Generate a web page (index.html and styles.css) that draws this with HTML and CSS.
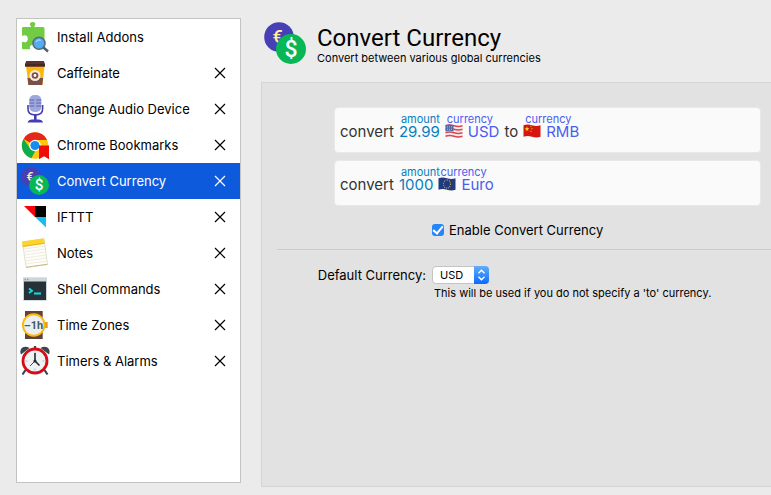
FILE: index.html
```html
<!DOCTYPE html>
<html lang="en">
<head>
<meta charset="utf-8">
<title>Convert Currency</title>
<link rel="stylesheet" href="styles.css">
</head>
<body>
<svg class="defs" aria-hidden="true">
  <symbol id="cross" viewBox="0 0 12 12"><path d="M1 1l10 10M11 1L1 11" fill="none" stroke="currentColor" stroke-width="1.150"/></symbol>
</svg>
<div class="window">
  <nav class="sidebar">
    <ul class="addons">
      <li class="addon">
        <svg class="icon" viewBox="0 0 36 36"><path d="M6 8h7.800c.8-.8-.9-1.400-.9-2.600a2.600 2.300 0 0 1 5.400 0c0 1.200-1.700 1.800-.9 2.600H26q1.500 0 1.500 1.500V29q0 1.300-1.300 1.300h-7c-1-1 .5-1.600-.4-3a3.200 3.200 0 0 0-5.600 0c-.9 1.400.6 2 -.4 3H6.300Q5 30.300 5 29v-6.500c2 1.300 5.800 1.300 5.800-2.800s-3.800-4-5.800-2.700V9q0-1 1-1z" fill="#72cc43"/><path d="M26 28l5 4.500" stroke="#4d5d69" stroke-width="2.400"/><circle cx="22" cy="24.200" r="6" fill="#52acf3" stroke="#586b77" stroke-width="1.600"/><path d="M19 23q2-3 5-1.500" stroke="#9bd3fb" stroke-width="1.300" fill="none"/></svg>
        <a href="#install">Install Addons</a>
      </li>
      <li class="addon">
        <svg class="icon" viewBox="0 0 36 36"><path d="M9 11h18.500l-2 19h-14z" fill="#fbb80c"/><path d="M10.500 23h15.600l-.8 7H11.300z" fill="#795047"/><path d="M9.200 6h17.600l1.200 3v2.500H8V9z" fill="#59332f"/><path d="M8 9h20v2.500H8z" fill="#482725"/><circle cx="18" cy="20.500" r="5.500" fill="#f7e9dc"/><circle cx="18" cy="20.500" r="3.300" fill="#7b5148"/><circle cx="18" cy="20.500" r="1.400" fill="#fff"/></svg>
        <a href="#caffeinate">Caffeinate</a>
        <button class="remove" aria-label="Remove Caffeinate"><svg><use href="#cross"/></svg></button>
      </li>
      <li class="addon">
        <svg class="icon" viewBox="0 0 36 36"><rect x="12.300" y="4" width="12" height="17" rx="5" fill="#9fa8da"/><path d="M12.300 9h5M19.300 9h5M12.300 12h5M19.300 12h5M12.300 15h5M19.300 15h5" stroke="#5c62b8" stroke-width="1"/><path d="M11 14v4q0 6 7.300 6t7.300-6v-4" fill="none" stroke="#453db0" stroke-width="1.600"/><path d="M17 23h2.600v6H17zM10.500 31.500q1-3 4.500-3h6.600q3.500 0 4.500 3z" fill="#453db0"/></svg>
        <a href="#audio">Change Audio Device</a>
        <button class="remove" aria-label="Remove Change Audio Device"><svg><use href="#cross"/></svg></button>
      </li>
      <li class="addon">
        <svg class="icon" viewBox="0 0 36 36"><circle cx="18" cy="18.500" r="13.200" fill="#ffc90a"/><path d="M18 18.500L6.600 11.900a13.200 13.200 0 0 1 22.900 0L30 13H18z" fill="#e5261f"/><path d="M6.600 11.900l6.700 9.500 4.700 3-3.600 6.800A13.200 13.200 0 0 1 6.600 11.900z" fill="#0eab4f"/><circle cx="18" cy="18.500" r="5.800" fill="#fff"/><circle cx="18" cy="18.500" r="4.600" fill="#168eee"/><path d="M22 18.500h10v13.800l-5-3-5 3z" fill="#f00d08"/></svg>
        <a href="#bookmarks">Chrome Bookmarks</a>
        <button class="remove" aria-label="Remove Chrome Bookmarks"><svg><use href="#cross"/></svg></button>
      </li>
      <li class="addon selected">
        <svg class="icon coins" viewBox="0 0 42 42"><circle cx="15" cy="15" r="14.800" fill="#473fb5"/><text x="13.500" y="20.500" class="glyph euro">€</text><circle cx="27" cy="27" r="15" fill="#07b655"/><text x="27" y="35" class="glyph dollar">$</text></svg>
        <a href="#currency" aria-current="page">Convert Currency</a>
        <button class="remove" aria-label="Remove Convert Currency"><svg><use href="#cross"/></svg></button>
      </li>
      <li class="addon">
        <svg class="icon" viewBox="0 0 36 36"><path d="M7 7h11v11z" fill="#fb0007"/><path d="M18 7h11v11H18z" fill="#000"/><path d="M18 18h11v10.500z" fill="#16bdf5"/></svg>
        <a href="#ifttt">IFTTT</a>
        <button class="remove" aria-label="Remove IFTTT"><svg><use href="#cross"/></svg></button>
      </li>
      <li class="addon">
        <svg class="icon" viewBox="0 0 36 36"><path d="M5.500 7L27 4l3.500 25.500L9 32.500z" fill="#fefdf8" stroke="#d8d3c2" stroke-width=".7"/><path d="M6.800 14l21-3M7.200 17l21-3M7.600 20l21-3M8 23l21-3M8.400 26l21-3M8.800 29l21-3" stroke="#e9e7e0" stroke-width=".8"/><path d="M9 32.300l21.300-3" stroke="#c9b984" stroke-width="1"/><path d="M5 6.500L27 3.300l.8 5.400L5.800 12z" fill="#fdd32c"/><path d="M5.700 11.400l22-3.200" stroke="#e0ad16" stroke-width=".8"/></svg>
        <a href="#notes">Notes</a>
        <button class="remove" aria-label="Remove Notes"><svg><use href="#cross"/></svg></button>
      </li>
      <li class="addon">
        <svg class="icon" viewBox="0 0 36 36"><path d="M6 6.300h24v23.500H6z" fill="#cdd6da"/><path d="M7 10.500h22v18.500H7z" fill="#263238"/><path d="M7.500 8.500h1.400M10 8.500h1.400" stroke="#8b9da6" stroke-width="1.300"/><path d="M12 17.500l3 2.300-3 2.300M17 22.500h7" fill="none" stroke="#12dbe5" stroke-width="1.900"/></svg>
        <a href="#shell">Shell Commands</a>
        <button class="remove" aria-label="Remove Shell Commands"><svg><use href="#cross"/></svg></button>
      </li>
      <li class="addon">
        <svg class="icon" viewBox="0 0 36 36"><path d="M8 4h17.700v28H8z" fill="#61433b"/><path d="M27 15h3.700v6H27z" fill="#e99a13"/><circle cx="16.700" cy="18" r="10.800" fill="#eceff1" stroke="#fbbb0b" stroke-width="1.900"/><text x="16.500" y="21.500" class="glyph offset">–1h</text></svg>
        <a href="#zones">Time Zones</a>
        <button class="remove" aria-label="Remove Time Zones"><svg><use href="#cross"/></svg></button>
      </li>
      <li class="addon">
        <svg class="icon" viewBox="0 0 36 36"><path d="M8.500 27l-3 4.500M27.500 27l3 4.500M18 3v3" stroke="#37474f" stroke-width="2.200"/><path d="M4 11.500C1.500 6 7 1.500 12.500 5zM32 11.500C34.500 6 29 1.500 23.500 5z" fill="#37474f"/><circle cx="18" cy="18" r="12" fill="#eff2f3" stroke="#d40d19" stroke-width="2.800"/><path d="M18 8.500v2M18 25.500v2M8.500 18h2M25.500 18h2" stroke="#b3bdc2" stroke-width="1"/><path d="M18 18.500V10M18 18l4.500 4.500" fill="none" stroke="#202a30" stroke-width="1.600"/><path d="M18 18l-5 5" stroke="#d40d19" stroke-width="1"/><circle cx="18" cy="18" r="1.600" fill="#202a30"/></svg>
        <a href="#timers">Timers &amp; Alarms</a>
        <button class="remove" aria-label="Remove Timers &amp; Alarms"><svg><use href="#cross"/></svg></button>
      </li>
    </ul>
  </nav>
  <main class="content">
    <header class="heading">
      <svg class="logo" viewBox="0 0 42 42"><circle cx="15" cy="15" r="14.800" fill="#473fb5"/><text x="13.500" y="20.500" class="glyph euro">€</text><circle cx="27" cy="27" r="15" fill="#07b655"/><text x="27" y="35" class="glyph dollar">$</text></svg>
      <div>
        <h1>Convert Currency</h1>
        <p>Convert between various global currencies</p>
      </div>
    </header>
    <section class="panel">
      <div class="examples">
        <div class="example">
          <span>convert</span>
          <span class="token amount"><small>amount</small><span>29.99</span></span>
          <span class="token currency"><small>currency</small><span class="value"><svg class="flag" viewBox="0 0 18 12" preserveAspectRatio="none"><path d="M.5 1q4-1.300 8.500 0t8.500 0v10q-4 1.300-8.500 0t-8.500 0z" fill="#f5eeee"/><path d="M.5 1.500q4-1.300 8.500 0t8.500 0M.5 4.500q4-1.300 8.500 0t8.500 0M.5 7.500q4-1.300 8.500 0t8.500 0M.5 10.500q4-1.300 8.500 0t8.500 0" fill="none" stroke="#dc4550" stroke-width="1.400"/><path d="M.5 1q4-1.300 8 0v5.500q-4-1.300-8 0z" fill="#4b6aa8"/><path d="M2 2.500h6M2 4.500h6" stroke="#c9d5ea" stroke-width=".8" stroke-dasharray="1 1"/></svg>USD</span></span>
          <span>to</span>
          <span class="token currency"><small>currency</small><span class="value"><svg class="flag" viewBox="0 0 18 12" preserveAspectRatio="none"><path d="M.5 1q4-1.300 8.500 0t8.500 0v10q-4 1.300-8.500 0t-8.500 0z" fill="#d4160f"/><path d="M4 2l.6 1.500h1.600L5 4.500l.4 1.700L4 5.200l-1.400 1L3 4.500 1.800 3.500h1.600z" fill="#f8cf20"/><path d="M7.500 2h1M8.500 4h1M7.500 6.300h1" stroke="#f8a820"/></svg>RMB</span></span>
        </div>
        <div class="example">
          <span>convert</span>
          <span class="token amount"><small>amount</small><span>1000</span></span>
          <span class="token currency"><small>currency</small><span class="value"><svg class="flag" viewBox="0 0 18 12" preserveAspectRatio="none"><path d="M.5 1q4-1.300 8.500 0t8.500 0v10q-4 1.300-8.500 0t-8.500 0z" fill="#21397e"/><circle cx="9" cy="6" r="3.500" fill="none" stroke="#cdbb54" stroke-dasharray=".8 1.030"/></svg>Euro</span></span>
        </div>
      </div>
      <div class="row">
        <input type="checkbox" id="enable" checked>
        <label for="enable">Enable Convert Currency</label>
      </div>
      <hr>
      <div class="setting">
        <label for="default">Default Currency:</label>
        <div>
          <span class="popup">
            <select id="default"><option>USD</option><option>Euro</option><option>RMB</option></select>
            <svg class="stepper" viewBox="0 0 15 18"><path d="M4.500 7.300l3-3 3 3M4.500 10.700l3 3 3-3" fill="none" stroke="#fff" stroke-width="1.400"/></svg>
          </span>
          <p class="hint">This will be used if you do not specify a 'to' currency.</p>
        </div>
      </div>
    </section>
  </main>
</div>
</body>
</html>
```
FILE: styles.css
```css
* { box-sizing: border-box; }
body {
  margin: 0;
  background: #ebebeb;
  color: #000;
  font: 13px/16px Inter, "Liberation Sans", sans-serif;
}
h1, p, ul { margin: 0; padding: 0; font-weight: 400; }
.defs { position: absolute; width: 0; height: 0; }
.window {
  display: grid;
  grid-template-columns: 225px 1fr;
  gap: 20px;
  min-height: 100vh;
  padding: 18px 0 8px 16px;
  overflow: hidden;
}
.sidebar {
  margin-bottom: 4px;
  border: 1px solid #c3c3c3;
  background: #fff;
}
.addons { list-style: none; }
.addon {
  display: flex;
  align-items: center;
  height: 36px;
  padding-right: 14px;
}
.addon a { flex: 1; padding-left: 4px; color: inherit; text-decoration: none; }
.icon { width: 36px; height: 36px; }
.icon.coins { padding: 4px; }
.remove {
  display: flex;
  width: 12px;
  height: 12px;
  padding: 0;
  border: 0;
  background: none;
  color: inherit;
}
.remove svg { width: 12px; height: 12px; }
.selected { background: #0d5bdc; color: #fff; }
.glyph { font-family: Roboto, sans-serif; font-weight: 500; text-anchor: middle; }
.euro { font-size: 18px; fill: #fff39a; }
.dollar { font-size: 23px; fill: #fff; }
.offset { font-size: 11px; font-weight: 700; fill: #455a64; }

.content { display: flex; flex-direction: column; }
.heading { display: flex; gap: 11px; height: 64px; padding: 4px 0 0 3px; }
.logo { width: 42px; height: 42px; }
h1 { padding-top: 2px; font-family: Roboto, sans-serif; font-size: 24px; line-height: 28px; }
.heading p, .hint { font-size: 11px; line-height: 14px; }
.heading p { line-height: 12px; }
.panel {
  flex: 1;
  padding: 24px 0 0 15px;
  border: 1px solid #d5d5d5;
  border-right: 0;
  background: #e2e2e2;
}
.examples { display: grid; gap: 7px; margin: 0 10px 0 57px; }
.example {
  display: flex;
  align-items: flex-end;
  gap: 5px;
  height: 46px;
  padding: 0 5px 12px;
  border: 1px solid #e8e8e8;
  border-radius: 4px;
  background: #fafafa;
  color: #333;
  font-size: 15px;
  line-height: 16px;
}
.token { display: grid; }
.token small { width: 0; padding-left: 2px; font-size: 11px; line-height: 10px; white-space: nowrap; }
.value { display: flex; gap: 5px; }
.flag { width: 18px; height: 14px; }
.amount { color: #087fbd; }
.currency { color: #4a5df0; }
.row { display: flex; align-items: center; gap: 5px; margin: 16px 0 11px 155px; }
input {
  display: grid;
  place-items: center;
  width: 12px;
  height: 12px;
  margin: 0;
  border-radius: 3px;
  background: #2585fb;
  appearance: none;
}
input:checked::after {
  content: "";
  width: 4px;
  height: 8px;
  margin-bottom: 2px;
  border: solid #fff;
  border-width: 0 2px 2px 0;
  transform: rotate(40deg);
}
hr { margin: 0; border: 0; border-top: 1px solid #cbcbcb; }
.setting {
  display: grid;
  grid-template-columns: 149px 1fr;
  gap: 6px;
  padding-top: 16px;
}
.setting > label { text-align: right; line-height: 18px; }
.popup { display: grid; width: 57px; height: 18px; }
select {
  grid-area: 1 / 1;
  padding: 0 7px;
  border: 1px solid #c4c4c4;
  border-radius: 4px;
  background: #fff;
  color: #000;
  font: 11px/16px Inter, sans-serif;
  appearance: none;
}
.stepper {
  grid-area: 1 / 1;
  justify-self: end;
  width: 15px;
  height: 18px;
  border-radius: 0 4px 4px 0;
  background: linear-gradient(#61aefb, #0c6bfa);
  pointer-events: none;
}
.hint { padding: 2px 0 0 2px; }
```
